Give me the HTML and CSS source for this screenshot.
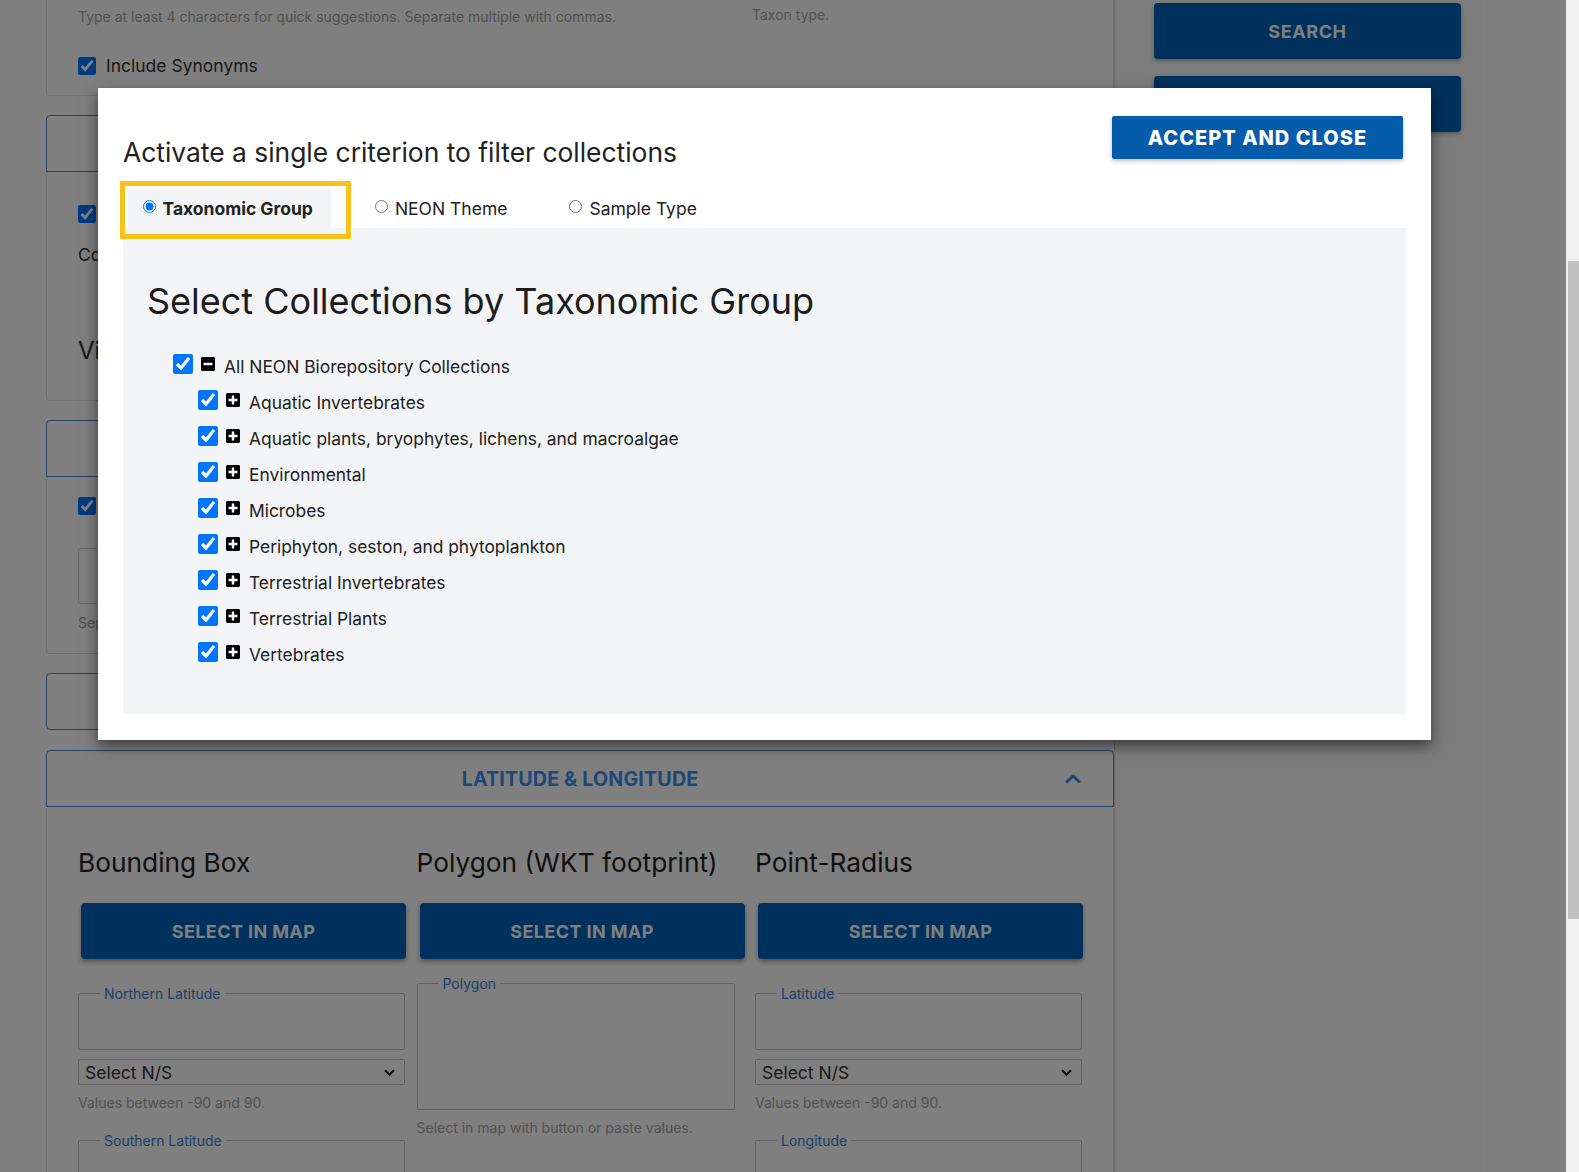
FILE: index.html
```html
<!DOCTYPE html>
<html lang="en">
<head>
<meta charset="utf-8">
<title>Biorepository search – collections filter</title>
<link rel="stylesheet" href="styles.css">
</head>
<body>
<div class="viewport">
  <div class="page">
    <div class="layout">
      <main class="main-col">
        <section class="card-plain">
          <div class="two-col">
            <div class="field">
              <div class="input-stub short"></div>
              <p class="help help-left">Type at least 4 characters for quick suggestions. Separate multiple with commas.</p>
            </div>
            <div class="field">
              <div class="input-stub"></div>
              <p class="help help-right">Taxon type.</p>
            </div>
          </div>
          <label class="check-row first-check"><input type="checkbox" checked> Include Synonyms</label>
        </section>

        <section class="card">
          <div class="acc-head" aria-label="Collections"><svg class="chev" viewBox="0 0 16 9" width="16" height="9"><polyline points="2,7.5 8,2 14,7.5"/></svg></div>
          <div class="acc-body body-coll">
            <div class="check-row"><input type="checkbox" checked aria-label="Include all collections"></div>
            <p class="plain">Collections</p>
            <h3 class="sub">View</h3>
          </div>
        </section>

        <section class="card">
          <div class="acc-head" aria-label="Sample identifiers"><svg class="chev" viewBox="0 0 16 9" width="16" height="9"><polyline points="2,7.5 8,2 14,7.5"/></svg></div>
          <div class="acc-body body-ids">
            <div class="check-row"><input type="checkbox" checked aria-label="Include other catalog numbers"></div>
            <div class="big-input"></div>
            <p class="help">Separate</p>
          </div>
        </section>

        <section class="card card-gap">
          <div class="acc-head closed" aria-label="Locality"><svg class="chev" viewBox="0 0 16 9" width="16" height="9"><polyline points="2,2 8,7.5 14,2"/></svg></div>
        </section>

        <section class="card">
          <div class="acc-head"><span class="acc-title">Latitude &amp; Longitude</span><svg class="chev" viewBox="0 0 16 9" width="16" height="9"><polyline points="2,7.5 8,2 14,7.5"/></svg></div>
          <div class="acc-body body-geo">
            <div class="geo-grid">
              <div class="geo-col">
                <h3 class="geo-title">Bounding Box</h3>
                <button class="map-btn">SELECT IN MAP</button>
                <fieldset class="fs"><legend>Northern Latitude</legend><div class="fs-in"></div></fieldset>
                <div class="select"><span>Select N/S</span><svg viewBox="0 0 10 6" width="11" height="7"><polyline points="1,1 5,5 9,1"/></svg></div>
                <p class="help tight">Values between -90 and 90.</p>
                <fieldset class="fs fs-next"><legend>Southern Latitude</legend><div class="fs-in"></div></fieldset>
              </div>
              <div class="geo-col">
                <h3 class="geo-title">Polygon (WKT footprint)</h3>
                <button class="map-btn">SELECT IN MAP</button>
                <fieldset class="fs fs-poly"><legend>Polygon</legend><div class="fs-in tall"></div></fieldset>
                <p class="help tight">Select in map with button or paste values.</p>
              </div>
              <div class="geo-col">
                <h3 class="geo-title">Point-Radius</h3>
                <button class="map-btn">SELECT IN MAP</button>
                <fieldset class="fs"><legend>Latitude</legend><div class="fs-in"></div></fieldset>
                <div class="select"><span>Select N/S</span><svg viewBox="0 0 10 6" width="11" height="7"><polyline points="1,1 5,5 9,1"/></svg></div>
                <p class="help tight">Values between -90 and 90.</p>
                <fieldset class="fs fs-next"><legend>Longitude</legend><div class="fs-in"></div></fieldset>
              </div>
            </div>
          </div>
        </section>
      </main>
      <aside class="sidebar">
        <button class="side-btn">SEARCH</button>
        <button class="side-btn" aria-label="Reset"></button>
      </aside>
    </div>

    <div class="overlay">
      <div class="modal" role="dialog" aria-modal="true">
        <div class="modal-head">
          <h2 class="modal-title">Activate a single criterion to filter collections</h2>
          <button class="accept-btn">ACCEPT AND CLOSE</button>
        </div>
        <div class="tabs">
          <label class="tab active"><input type="radio" name="crit" checked> Taxonomic Group</label>
          <label class="tab"><input type="radio" name="crit"> NEON Theme</label>
          <label class="tab"><input type="radio" name="crit"> Sample Type</label>
        </div>
        <div class="panel">
          <h2 class="panel-title">Select Collections by Taxonomic Group</h2>
          <ul class="tree">
            <li class="node root">
              <input type="checkbox" checked>
              <svg class="tog" viewBox="0 0 448 512"><path d="M400 32H48C21.5 32 0 53.5 0 80v352c0 26.5 21.5 48 48 48h352c26.5 0 48-21.5 48-48V80c0-26.5-21.5-48-48-48zM92 296c-6.6 0-12-5.4-12-12v-56c0-6.6 5.4-12 12-12h264c6.6 0 12 5.4 12 12v56c0 6.6-5.4 12-12 12H92z"/></svg>
              <span>All NEON Biorepository Collections</span>
            </li>
            <li class="node child"><input type="checkbox" checked><svg class="tog" viewBox="0 0 448 512"><path d="M400 32H48C21.5 32 0 53.5 0 80v352c0 26.5 21.5 48 48 48h352c26.5 0 48-21.5 48-48V80c0-26.5-21.5-48-48-48zm-32 252c0 6.6-5.4 12-12 12h-92v92c0 6.6-5.4 12-12 12h-56c-6.6 0-12-5.4-12-12v-92H92c-6.6 0-12-5.4-12-12v-56c0-6.6 5.4-12 12-12h92v-92c0-6.6 5.4-12 12-12h56c6.6 0 12 5.4 12 12v92h92c6.6 0 12 5.4 12 12v56z"/></svg><span>Aquatic Invertebrates</span></li>
            <li class="node child"><input type="checkbox" checked><svg class="tog" viewBox="0 0 448 512"><path d="M400 32H48C21.5 32 0 53.5 0 80v352c0 26.5 21.5 48 48 48h352c26.5 0 48-21.5 48-48V80c0-26.5-21.5-48-48-48zm-32 252c0 6.6-5.4 12-12 12h-92v92c0 6.6-5.4 12-12 12h-56c-6.6 0-12-5.4-12-12v-92H92c-6.6 0-12-5.4-12-12v-56c0-6.6 5.4-12 12-12h92v-92c0-6.6 5.4-12 12-12h56c6.6 0 12 5.4 12 12v92h92c6.6 0 12 5.4 12 12v56z"/></svg><span>Aquatic plants, bryophytes, lichens, and macroalgae</span></li>
            <li class="node child"><input type="checkbox" checked><svg class="tog" viewBox="0 0 448 512"><path d="M400 32H48C21.5 32 0 53.5 0 80v352c0 26.5 21.5 48 48 48h352c26.5 0 48-21.5 48-48V80c0-26.5-21.5-48-48-48zm-32 252c0 6.6-5.4 12-12 12h-92v92c0 6.6-5.4 12-12 12h-56c-6.6 0-12-5.4-12-12v-92H92c-6.6 0-12-5.4-12-12v-56c0-6.6 5.4-12 12-12h92v-92c0-6.6 5.4-12 12-12h56c6.6 0 12 5.4 12 12v92h92c6.6 0 12 5.4 12 12v56z"/></svg><span>Environmental</span></li>
            <li class="node child"><input type="checkbox" checked><svg class="tog" viewBox="0 0 448 512"><path d="M400 32H48C21.5 32 0 53.5 0 80v352c0 26.5 21.5 48 48 48h352c26.5 0 48-21.5 48-48V80c0-26.5-21.5-48-48-48zm-32 252c0 6.6-5.4 12-12 12h-92v92c0 6.6-5.4 12-12 12h-56c-6.6 0-12-5.4-12-12v-92H92c-6.6 0-12-5.4-12-12v-56c0-6.6 5.4-12 12-12h92v-92c0-6.6 5.4-12 12-12h56c6.6 0 12 5.4 12 12v92h92c6.6 0 12 5.4 12 12v56z"/></svg><span>Microbes</span></li>
            <li class="node child"><input type="checkbox" checked><svg class="tog" viewBox="0 0 448 512"><path d="M400 32H48C21.5 32 0 53.5 0 80v352c0 26.5 21.5 48 48 48h352c26.5 0 48-21.5 48-48V80c0-26.5-21.5-48-48-48zm-32 252c0 6.6-5.4 12-12 12h-92v92c0 6.6-5.4 12-12 12h-56c-6.6 0-12-5.4-12-12v-92H92c-6.6 0-12-5.4-12-12v-56c0-6.6 5.4-12 12-12h92v-92c0-6.6 5.4-12 12-12h56c6.6 0 12 5.4 12 12v92h92c6.6 0 12 5.4 12 12v56z"/></svg><span>Periphyton, seston, and phytoplankton</span></li>
            <li class="node child"><input type="checkbox" checked><svg class="tog" viewBox="0 0 448 512"><path d="M400 32H48C21.5 32 0 53.5 0 80v352c0 26.5 21.5 48 48 48h352c26.5 0 48-21.5 48-48V80c0-26.5-21.5-48-48-48zm-32 252c0 6.6-5.4 12-12 12h-92v92c0 6.6-5.4 12-12 12h-56c-6.6 0-12-5.4-12-12v-92H92c-6.6 0-12-5.4-12-12v-56c0-6.6 5.4-12 12-12h92v-92c0-6.6 5.4-12 12-12h56c6.6 0 12 5.4 12 12v92h92c6.6 0 12 5.4 12 12v56z"/></svg><span>Terrestrial Invertebrates</span></li>
            <li class="node child"><input type="checkbox" checked><svg class="tog" viewBox="0 0 448 512"><path d="M400 32H48C21.5 32 0 53.5 0 80v352c0 26.5 21.5 48 48 48h352c26.5 0 48-21.5 48-48V80c0-26.5-21.5-48-48-48zm-32 252c0 6.6-5.4 12-12 12h-92v92c0 6.6-5.4 12-12 12h-56c-6.6 0-12-5.4-12-12v-92H92c-6.6 0-12-5.4-12-12v-56c0-6.6 5.4-12 12-12h92v-92c0-6.6 5.4-12 12-12h56c6.6 0 12 5.4 12 12v92h92c6.6 0 12 5.4 12 12v56z"/></svg><span>Terrestrial Plants</span></li>
            <li class="node child"><input type="checkbox" checked><svg class="tog" viewBox="0 0 448 512"><path d="M400 32H48C21.5 32 0 53.5 0 80v352c0 26.5 21.5 48 48 48h352c26.5 0 48-21.5 48-48V80c0-26.5-21.5-48-48-48zm-32 252c0 6.6-5.4 12-12 12h-92v92c0 6.6-5.4 12-12 12h-56c-6.6 0-12-5.4-12-12v-92H92c-6.6 0-12-5.4-12-12v-56c0-6.6 5.4-12 12-12h92v-92c0-6.6 5.4-12 12-12h56c6.6 0 12 5.4 12 12v92h92c6.6 0 12 5.4 12 12v56z"/></svg><span>Vertebrates</span></li>
          </ul>
        </div>
        <div class="highlight" aria-hidden="true"></div>
      </div>
    </div>
  </div>
  <div class="scrollbar"><div class="thumb"></div></div>
</div>
</body>
</html>
```
FILE: styles.css
```css
* { box-sizing: border-box; }
html, body { margin: 0; padding: 0; height: 100%; overflow: hidden; }
body { font-family: Inter, "Noto Sans", sans-serif; color: #212529; background: #fff; }
button { font-family: inherit; cursor: pointer; }
p, h2, h3, ul { margin: 0; }

.viewport { display: flex; width: 1579px; height: 1172px; overflow: hidden; }
.page { position: relative; flex: 0 0 1566px; height: 1172px; overflow: hidden; background: #fff; }
.scrollbar { flex: 0 0 13px; background: #f1f1f1; padding: 261px 0 0 2px; }
.thumb { height: 658px; background: #c1c1c1; }

/* background page */
.layout { display: flex; margin-top: -48px; padding-left: 46px; height: 1220px; }
.main-col { flex: 0 0 1068px; }
.sidebar { flex: 0 0 367px; background: #f8f9f8; border-left: 1px solid #d4d4d4; padding: 51px 0 0 39px; display: flex; flex-direction: column; gap: 17px; }
.side-btn { width: 307px; height: 56px; border: 0; border-radius: 4px; background: #0060b8; color: #fff; font-size: 18px; font-weight: 700; letter-spacing: 0.6px; box-shadow: 0 2px 4px rgba(0,0,0,.3); }

.card-plain { border: 1px solid #dcdcdc; border-radius: 4px; padding: 6px 28px 18.5px 31px; margin-bottom: 19px; }
.two-col { display: grid; grid-template-columns: 1fr 333px; column-gap: 32px; }
.input-stub { height: 41px; border: 1px solid #c8c8c8; border-radius: 3px; }
.input-stub.short { height: 38px; }
.help { margin-top: 7px; font-size: 14px; line-height: 20px; color: #a2a2a2; }
.help-left { margin-top: 10px; }
.help-right { margin-top: 5px; }
.check-row { display: flex; align-items: center; gap: 10px; height: 22px; font-size: 17.5px; line-height: 22px; color: #333; }
.check-row.first-check { margin-top: 27.5px; }
.check-row input { width: 18px; height: 18px; margin: 0; }

.card { margin-bottom: 19px; }
.card-gap { margin-bottom: 20px; }
.acc-head { height: 57px; border: 1px solid #4a86c8; border-radius: 4px 4px 0 0; display: grid; grid-template-columns: 1fr auto 1fr; align-items: center; padding: 0 32px; font-size: 19.6px; font-weight: 700; color: #3a8ef0; text-transform: uppercase; letter-spacing: 0.2px; }
.acc-head.closed { border-radius: 4px; }
.acc-title { grid-column: 2; }
.chev { grid-column: 3; justify-self: end; fill: none; stroke: #3a8ef0; stroke-width: 3; stroke-linecap: round; stroke-linejoin: round; }
.acc-body { border: 1px solid #dcdcdc; border-top: 0; border-radius: 0 0 4px 4px; padding: 0 31px; }
.body-coll { height: 229px; padding-top: 31px; }
.plain { margin-top: 16px; font-size: 17.5px; line-height: 27px; color: #333; }
.sub { margin-top: 68px; font-size: 24px; line-height: 29px; font-weight: 400; color: #333; }
.body-ids { height: 177px; padding-top: 18px; }
.big-input { margin-top: 31px; height: 56px; width: 640px; border: 1px solid #c8c8c8; border-radius: 3px; }
.body-ids .help { margin-top: 9px; }

.body-geo { padding-top: 40px; height: 420px; }
.geo-grid { display: grid; grid-template-columns: repeat(3, 327px); column-gap: 11.5px; }
.geo-col { display: flex; flex-direction: column; align-items: flex-start; }
.geo-title { font-size: 26.3px; line-height: 32px; font-weight: 400; color: #1e1e1e; }
.map-btn { margin: 24px 0 0 3px; width: 325px; height: 56px; border: 0; border-radius: 4px; background: #0060b8; color: #fff; font-size: 18px; font-weight: 700; letter-spacing: 0.4px; box-shadow: 0 3px 5px rgba(0,0,0,.35); }
.fs { margin: 26px 0 0; padding: 0; width: 327px; border: 1px solid #c4c4c4; border-radius: 2px; min-width: 0; }
.fs legend { margin-left: 21px; padding: 0 4px; font-size: 14px; line-height: 17px; color: #3d7fcc; }
.fs-in { height: 47px; }
.fs-in.tall { height: 117px; }
.fs-poly { width: 318px; margin-top: 16px; }
.fs-next { margin-top: 19px; }
.select { margin-top: 9px; width: 327px; height: 26px; border: 1px solid #c4c4c4; border-radius: 2px; display: flex; align-items: center; justify-content: space-between; padding: 0 9px 0 6px; font-size: 17.5px; color: #333; }
.select svg { fill: none; stroke: #222; stroke-width: 2; }
.help.tight { margin-top: 8px; }

/* modal */
.overlay { position: absolute; inset: 0; background: rgba(0,0,0,.5); }
.modal { position: absolute; left: 98px; top: 88px; width: 1333px; height: 652px; background: #fff; box-shadow: 0 6px 14px rgba(0,0,0,.55); padding: 28px 25px 26px 25px; display: flex; flex-direction: column; }
.modal-head { display: flex; justify-content: space-between; align-items: flex-start; height: 52px; padding-right: 3px; }
.modal-title { margin-top: 21px; font-size: 26.4px; line-height: 31px; font-weight: 400; color: #212121; }
.accept-btn { width: 291px; height: 43px; border: 0; border-radius: 2px; background: #055cab; color: #fff; font-size: 20px; font-weight: 800; letter-spacing: 1px; box-shadow: 0 2px 4px rgba(0,0,0,.25); }
.tabs { display: flex; gap: 29px; margin-top: 20px; padding-left: 4.5px; height: 40px; }
.tab { display: flex; align-items: center; gap: 7px; padding: 0 18px 0 15px; font-size: 17.5px; color: #212121; }
.tab input { margin: 0 0 3px; width: 13px; height: 13px; }
.tab.active { background: #f3f4f6; font-weight: 700; }
.panel { flex: 1; background: #f3f4f6; padding: 0 24px; }
.panel-title { margin-top: 52px; font-size: 36px; line-height: 43px; font-weight: 400; color: #1c1c1c; }
.tree { list-style: none; padding: 0 0 0 26px; margin-top: 30px; }
.node { display: flex; align-items: flex-start; height: 36px; font-size: 17.4px; line-height: 28px; color: #212121; }
.node input { width: 20px; height: 20px; margin: 1px 0 0; flex: none; }
.node .tog { width: 14px; height: 16px; margin: 3px 9px 0 8px; flex: none; fill: #000; }
.node.child { padding-left: 25px; }
.highlight { position: absolute; left: 22px; top: 93px; width: 231px; height: 58px; border: 5px solid #f8c21c; }
```
